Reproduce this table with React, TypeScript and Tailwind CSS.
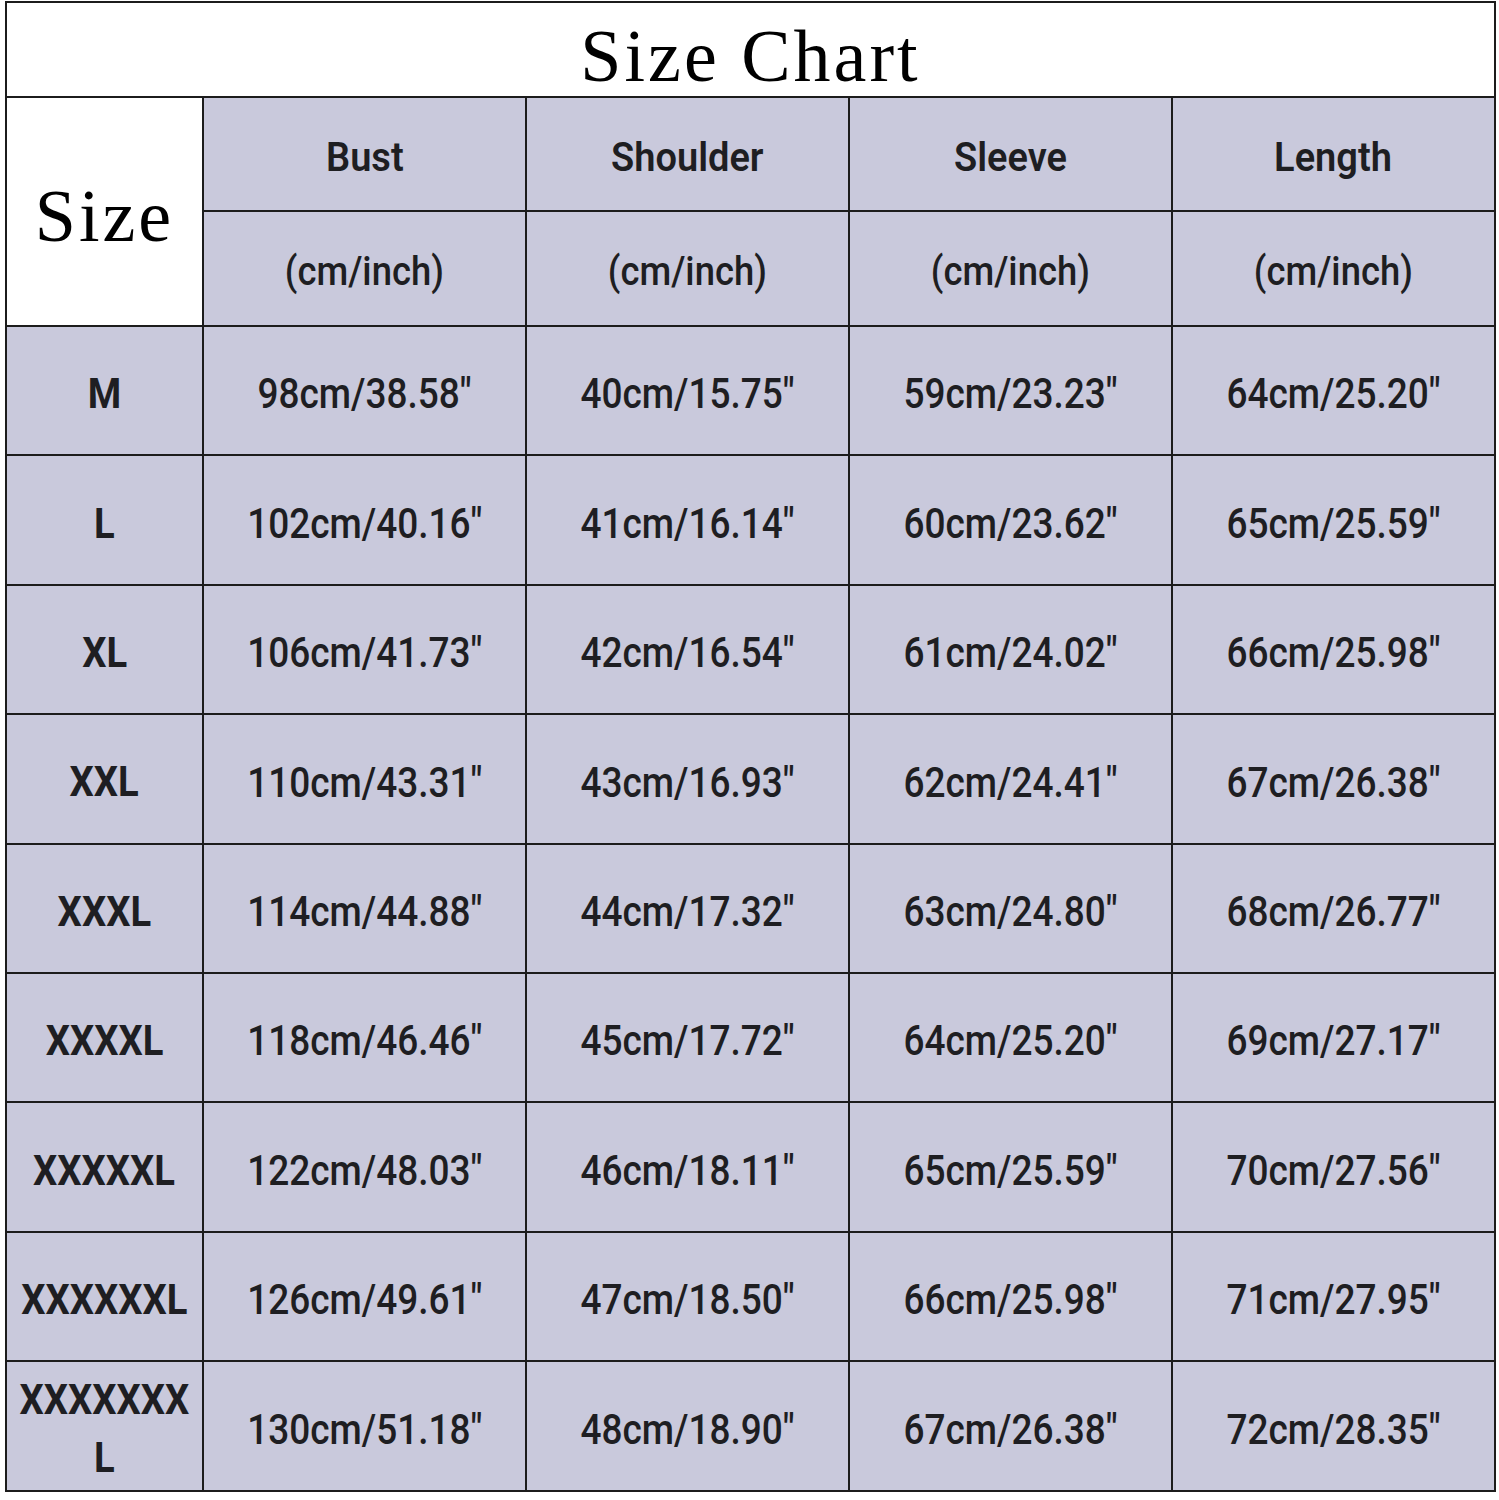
const rows: [string, string, string, string, string][] = [
  ['M', '98cm/38.58"', '40cm/15.75"', '59cm/23.23"', '64cm/25.20"'],
  ['L', '102cm/40.16"', '41cm/16.14"', '60cm/23.62"', '65cm/25.59"'],
  ['XL', '106cm/41.73"', '42cm/16.54"', '61cm/24.02"', '66cm/25.98"'],
  ['XXL', '110cm/43.31"', '43cm/16.93"', '62cm/24.41"', '67cm/26.38"'],
  ['XXXL', '114cm/44.88"', '44cm/17.32"', '63cm/24.80"', '68cm/26.77"'],
  ['XXXXL', '118cm/46.46"', '45cm/17.72"', '64cm/25.20"', '69cm/27.17"'],
  ['XXXXXL', '122cm/48.03"', '46cm/18.11"', '65cm/25.59"', '70cm/27.56"'],
  ['XXXXXXL', '126cm/49.61"', '47cm/18.50"', '66cm/25.98"', '71cm/27.95"'],
  ['XXXXXXX L', '130cm/51.18"', '48cm/18.90"', '67cm/26.38"', '72cm/28.35"'],
];

const heads = ['Bust', 'Shoulder', 'Sleeve', 'Length'];

const cell =
  "bg-[#c9c9dc] flex items-center justify-center text-[#1e1e22] font-['Roboto',sans-serif]";

export default function App() {
  return (
    <div className="w-[1499px] h-[1500px] bg-white pt-[1px] pl-[5px]">
      <div className="w-[1491px] border-2 border-[#1c1c1c] bg-[#1c1c1c]">
        <div className="h-[93px] bg-white flex items-center justify-center">
          <span className="font-['Liberation_Serif',serif] text-[74px] leading-none tracking-[3px] text-black mt-[12px]">
            Size Chart
          </span>
        </div>
        <div className="mt-[2px] grid grid-cols-[195px_repeat(4,321px)] grid-rows-[112px_113px_repeat(9,127.4px)] gap-[2px]">
          <div className="row-span-2 bg-white flex items-center justify-center">
            <span className="font-['Liberation_Serif',serif] text-[74px] leading-none tracking-[3px] text-black mt-[8px]">
              Size
            </span>
          </div>
          {heads.map((h) => (
            <div key={h} className={cell}>
              <span className="inline-block scale-x-[0.95] whitespace-nowrap text-[40px] font-semibold mt-[8px]">{h}</span>
            </div>
          ))}
          {heads.map((h) => (
            <div key={h + 'u'} className={cell}>
              <span className="inline-block scale-x-[0.91] whitespace-nowrap text-[40px] font-medium mt-[6px]">(cm/inch)</span>
            </div>
          ))}
          {rows.map((r) => (
            <>
              <div key={r[0]} className={cell + ' text-center font-bold'}>
                {r[0] === 'XXXXXXX L' ? (
                  <span className="inline-block scale-x-[0.91] text-[42px] leading-[58px] mt-[6px]">
                    XXXXXXX
                    <br />L
                  </span>
                ) : (
                  <span className="inline-block scale-x-[0.91] whitespace-nowrap text-[42px] mt-[6px]">{r[0]}</span>
                )}
              </div>
              {r.slice(1).map((v, i) => (
                <div key={r[0] + i} className={cell}>
                  <span className="inline-block scale-x-[0.86] whitespace-nowrap text-[43px] font-medium mt-[6px]">{v}</span>
                </div>
              ))}
            </>
          ))}
        </div>
      </div>
    </div>
  );
}
